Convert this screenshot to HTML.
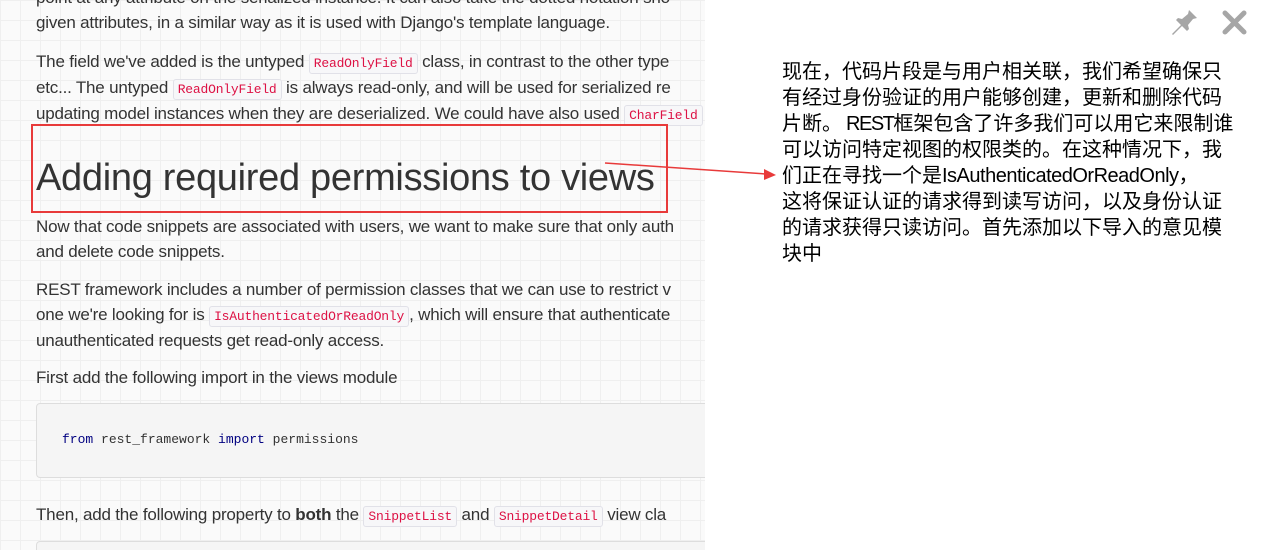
<!DOCTYPE html>
<html><head><meta charset="utf-8"><style>
*{margin:0;padding:0;box-sizing:border-box}
html,body{width:1274px;height:550px;overflow:hidden}
body{background:#fff;font-family:"Liberation Sans",Arial,sans-serif;position:relative}
#left{position:absolute;left:0;top:0;width:705px;height:550px;overflow:hidden;background-color:#fafafa;
background-image:linear-gradient(#efefef 1px,transparent 1px),linear-gradient(90deg,#efefef 1px,transparent 1px);background-size:20px 20px;color:#333}
.t{position:absolute;left:36px;font-size:17px;white-space:nowrap;letter-spacing:-0.2px}
code{font-family:"Liberation Mono",monospace;font-size:13px;color:#d14;background:#f7f7f9;border:1px solid #e1e1e8;border-radius:3px;padding:2px 4px}
.pre{position:absolute;left:36px;width:700px;background:#f5f5f5;border:1px solid #ddd;border-radius:4px}
#right{position:absolute;left:705px;top:0;width:569px;height:550px;background:#fff}
#cn{position:absolute;left:782px;top:59px;white-space:nowrap;font-family:"Liberation Sans","Noto Sans CJK SC",sans-serif;font-size:20px;line-height:26px;color:#000}
.n{letter-spacing:-0.5px}
</style></head><body>
<div id="left">
<div class="t" style="top:-12px">point at any attribute on the serialized instance. It can also take the dotted notation sho</div>
<div class="t" style="top:13px">given attributes, in a similar way as it is used with Django's template language.</div>
<div class="t" style="top:52px">The field we've added is the untyped <code>ReadOnlyField</code> class, in contrast to the other type</div>
<div class="t" style="top:78px">etc... The untyped <code>ReadOnlyField</code> is always read-only, and will be used for serialized re</div>
<div class="t" style="top:104px">updating model instances when they are deserialized. We could have also used <code>CharField</code></div>
<div style="position:absolute;left:31px;top:124px;width:637px;height:89px;border:2px solid #e83a3a"></div>
<div style="position:absolute;left:36px;top:157px;font-size:38px;color:#333;white-space:nowrap;letter-spacing:-0.3px">Adding required permissions to views</div>
<div class="t" style="top:217px">Now that code snippets are associated with users, we want to make sure that only auth</div>
<div class="t" style="top:242px">and delete code snippets.</div>
<div class="t" style="top:280px">REST framework includes a number of permission classes that we can use to restrict v</div>
<div class="t" style="top:305px">one we're looking for is <code>IsAuthenticatedOrReadOnly</code>, which will ensure that authenticate</div>
<div class="t" style="top:331px">unauthenticated requests get read-only access.</div>
<div class="t" style="top:368px">First add the following import in the views module</div>
<div class="pre" style="top:403px;height:75px"><div style="position:absolute;left:25px;top:28px;font-family:'Liberation Mono',monospace;font-size:13px;color:#333"><span style="color:#000080">from</span> rest_framework <span style="color:#000080">import</span> permissions</div></div>
<div class="t" style="top:505px">Then, add the following property to <b>both</b> the <code>SnippetList</code> and <code>SnippetDetail</code> view cla</div>
<div class="pre" style="top:541px;height:9px;border-bottom:none;border-radius:4px 4px 0 0"></div>
</div>
<div id="right"></div>
<svg style="position:absolute;left:0;top:0" width="1274" height="550">
<line x1="605" y1="163" x2="766" y2="174" stroke="#e83a3a" stroke-width="1.5"/>
<polygon points="776,175 764,169 764,180" fill="#e83a3a"/>
<g fill="#a6a6a6"><path d="M1188 9 L1197 18 L1193 19 L1188 25 L1189 29 L1187 31 L1182 26 L1173 35 L1172 34 L1181 25 L1176 20 L1178 18 L1182 19 L1188 14 L1189 10Z"/></g>
<path d="M1225 13 L1244 32 M1244 13 L1225 32" stroke="#a6a6a6" stroke-width="5" stroke-linecap="round"/>
</svg>
<div id="cn">现在，代码片段是与用户相关联，我们希望确保只<br>有经过身份验证的用户能够创建，更新和删除代码<br>片断。<span style="letter-spacing:-1.5px">&nbsp;REST</span>框架包含了许多我们可以用它来限制谁<br>可以访问特定视图的权限类的。在这种情况下，我<br>们正在寻找一个是<span class="n">IsAuthenticatedOrReadOnly</span>，<br>这将保证认证的请求得到读写访问，以及身份认证<br>的请求获得只读访问。首先添加以下导入的意见模<br>块中</div>
</body></html>
